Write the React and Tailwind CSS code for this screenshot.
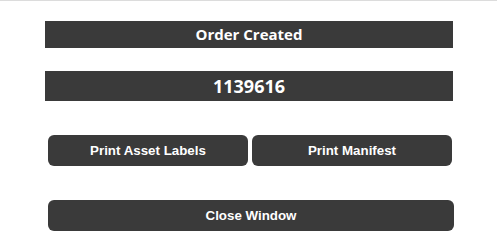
import React from "react";

export default function App() {
  const btn =
    "h-[31px] rounded-[6px] bg-[#3a3a3a] text-white font-bold text-[13.33px] flex items-center justify-center";
  return (
    <div className="w-[497px] h-[245px] bg-white border-t border-[#dcdcdc] relative">
      <div className="ml-[45px] w-[408px] pt-[20px] flex flex-col">
        <div
          className="h-[27px] bg-[#3a3a3a] text-white font-bold text-[15px] flex items-center justify-center"
          style={{ fontFamily: '"Open Sans", "Noto Sans", sans-serif' }}
        >
          Order Created
        </div>
        <div
          className="mt-[23px] h-[30px] bg-[#3a3a3a] text-white font-bold text-[18px] flex items-center justify-center"
          style={{ fontFamily: '"Open Sans", "Noto Sans", sans-serif' }}
        >
          1139616
        </div>
        <div
          className="mt-[34px] ml-[3px] flex gap-[4px]"
          style={{ fontFamily: '"Liberation Sans", Arial, sans-serif' }}
        >
          <div className={`${btn} w-[200px]`}>Print Asset Labels</div>
          <div className={`${btn} w-[200px]`}>Print Manifest</div>
        </div>
        <div
          className="mt-[34px] ml-[3px]"
          style={{ fontFamily: '"Liberation Sans", Arial, sans-serif' }}
        >
          <div className={`${btn} w-[406px]`}>Close Window</div>
        </div>
      </div>
    </div>
  );
}
